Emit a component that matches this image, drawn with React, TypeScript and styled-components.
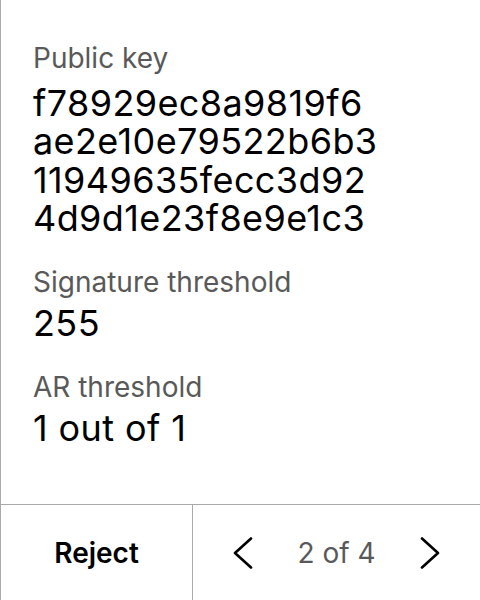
import React from "react";
import styled, { createGlobalStyle } from "styled-components";

const Global = createGlobalStyle`
  html, body { margin: 0; padding: 0; background: #fff; }
  body { font-family: Inter, "Noto Sans", sans-serif; }
  #root { height: 600px; }
`;

const Frame = styled.div`
  height: 600px;
  box-sizing: border-box;
  border-left: 1px solid #aaaaaa;
  display: flex;
  flex-direction: column;
`;

const Content = styled.div`
  flex: 1;
  padding: 42px 32px 0 32px;
  display: flex;
  flex-direction: column;
  gap: 28px;
`;

const Field = styled.div`
  display: flex;
  flex-direction: column;
  gap: 5px;
`;

const Label = styled.div`
  font-size: 28px;
  line-height: 1.2;
  color: #595959;
`;

const Value = styled.div<{ $multiline?: boolean }>`
  font-size: 36px;
  line-height: 38.5px;
  letter-spacing: 0.4px;
  color: #000;
  margin-top: ${(p) => (p.$multiline ? "3px" : "0")};
`;

const Footer = styled.div`
  height: 96px;
  box-sizing: border-box;
  border-top: 1px solid #aaaaaa;
  display: flex;
`;

const RejectButton = styled.button`
  width: 192px;
  flex: none;
  border: none;
  border-right: 1px solid #aaaaaa;
  background: transparent;
  font-family: inherit;
  font-size: 28px;
  font-weight: 600;
  color: #000;
  padding: 0;
`;

const Pager = styled.div`
  flex: 1;
  display: flex;
  align-items: center;
  justify-content: space-between;
  padding: 0 34px;
`;

const NavButton = styled.button`
  width: 32px;
  height: 40px;
  border: none;
  background: transparent;
  padding: 0;
  display: flex;
  align-items: center;
  justify-content: center;
`;

const PageText = styled.span`
  font-size: 28px;
  color: #595959;
`;

const Chevron: React.FC<{ dir: "left" | "right" }> = ({ dir }) => (
  <svg width="20" height="32" viewBox="0 0 20 32" fill="none">
    <polyline
      points={dir === "left" ? "18,1.5 2,16 18,30.5" : "2,1.5 18,16 2,30.5"}
      stroke="#000"
      strokeWidth="2.6"
      strokeLinecap="round"
      strokeLinejoin="round"
    />
  </svg>
);

export default function App() {
  return (
    <>
      <Global />
      <Frame>
        <Content>
          <Field>
            <Label>Public key</Label>
            <Value $multiline>
              f78929ec8a9819f6
              <br />
              ae2e10e79522b6b3
              <br />
              11949635fecc3d92
              <br />
              4d9d1e23f8e9e1c3
            </Value>
          </Field>
          <Field>
            <Label>Signature threshold</Label>
            <Value>255</Value>
          </Field>
          <Field>
            <Label>AR threshold</Label>
            <Value>1 out of 1</Value>
          </Field>
        </Content>
        <Footer>
          <RejectButton>Reject</RejectButton>
          <Pager>
            <NavButton aria-label="Previous">
              <Chevron dir="left" />
            </NavButton>
            <PageText>2 of 4</PageText>
            <NavButton aria-label="Next">
              <Chevron dir="right" />
            </NavButton>
          </Pager>
        </Footer>
      </Frame>
    </>
  );
}
